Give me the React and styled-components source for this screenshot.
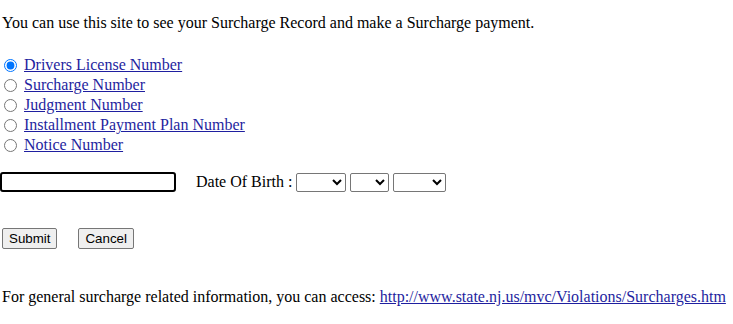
import React from "react";
import styled, { createGlobalStyle } from "styled-components";

const Global = createGlobalStyle`
  html, body { margin: 0; padding: 0; background: #fff; }
  body { font-family: "Liberation Serif", "Times New Roman", serif; font-size: 16px; color: #000; }
`;

const Page = styled.div`
  padding: 0 2px;
`;

const Intro = styled.p`
  margin: 0;
  padding-top: 14px;
  line-height: 18px;
`;

const RadioList = styled.div`
  display: flex;
  flex-direction: column;
  margin-top: 23px;
`;

const RadioRow = styled.label`
  display: flex;
  align-items: center;
  height: 20px;
`;

const Radio = styled.input`
  margin: 0 7px 0 2px;
  width: 13px;
  height: 13px;
  accent-color: #0075ff;
`;

const Link = styled.a`
  color: #1f1fa0;
  text-decoration: underline;
`;

const FieldRow = styled.div`
  display: flex;
  align-items: center;
  margin-top: 17px;
  margin-left: -2px;
`;

const TextInput = styled.input`
  box-sizing: border-box;
  width: 176px;
  height: 20px;
  margin: 0;
  border: 2px solid #000;
  border-radius: 3px;
  outline: none;
`;

const DobLabel = styled.span`
  margin-left: 20px;
  margin-right: 4px;
`;

const Select = styled.select`
  box-sizing: border-box;
  width: ${(p) => p.$w}px;
  height: 19px;
  margin: 0 4px 0 0;
  border: 1px solid #767676;
  border-radius: 2px;
  background: #fff;
`;

const ButtonRow = styled.div`
  display: flex;
  gap: 21px;
  margin-top: 36px;
`;

const Button = styled.button`
  box-sizing: border-box;
  height: 21px;
  padding: 0 6px;
  font-family: Arial, "Liberation Sans", sans-serif;
  font-size: 13.333px;
  background: #efefef;
  border: 1px solid #767676;
  border-radius: 2px;
  color: #000;
`;

const Footer = styled.p`
  margin: 0;
  margin-top: 39px;
  line-height: 18px;
`;

export default function App() {
  const options = [
    "Drivers License Number",
    "Surcharge Number",
    "Judgment Number",
    "Installment Payment Plan Number",
    "Notice Number",
  ];
  return (
    <>
      <Global />
      <Page>
        <Intro>You can use this site to see your Surcharge Record and make a Surcharge payment.</Intro>
        <RadioList>
          {options.map((o, i) => (
            <RadioRow key={o}>
              <Radio type="radio" name="kind" defaultChecked={i === 0} />
              <Link href="#">{o}</Link>
            </RadioRow>
          ))}
        </RadioList>
        <FieldRow>
          <TextInput type="text" />
          <DobLabel>Date Of Birth :</DobLabel>
          <Select $w={50}><option></option></Select>
          <Select $w={39}><option></option></Select>
          <Select $w={53}><option></option></Select>
        </FieldRow>
        <ButtonRow>
          <Button>Submit</Button>
          <Button>Cancel</Button>
        </ButtonRow>
        <Footer>
          For general surcharge related information, you can access:{" "}
          <Link href="#">http://www.state.nj.us/mvc/Violations/Surcharges.htm</Link>
        </Footer>
      </Page>
    </>
  );
}
